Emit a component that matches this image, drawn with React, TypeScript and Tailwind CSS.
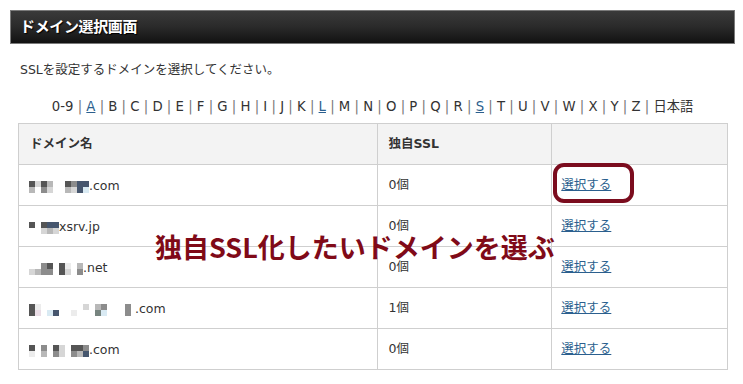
import React from 'react';

const FONT = { fontFamily: '"DejaVu Sans", "Noto Sans CJK JP", sans-serif' };

// ぼかし（モザイク）用の色
const PX: Record<string, string> = {
  a: 'bg-[#555555]',
  b: 'bg-[#8c8c8c]',
  c: 'bg-[#b8b8b8]',
  d: 'bg-[#d6d6d6]',
  e: 'bg-[#ececec]',
  n: 'bg-[#46566e]',
  p: 'bg-[#eadde6]',
  s: 'bg-[#d9eaf3]',
  g: 'bg-[#77847f]',
  '.': 'bg-transparent',
};

function Mosaic({ rows }: { rows: string[] }) {
  return (
    <span className="inline-flex flex-col align-middle">
      {rows.map((r, i) => (
        <span key={i} className="flex">
          {r.split('').map((ch, j) => (
            <span key={j} className={`block w-[6px] h-[6px] ${PX[ch]}`} />
          ))}
        </span>
      ))}
    </span>
  );
}

const letters = ['0-9', 'A', 'B', 'C', 'D', 'E', 'F', 'G', 'H', 'I', 'J', 'K', 'L', 'M', 'N', 'O', 'P', 'Q', 'R', 'S', 'T', 'U', 'V', 'W', 'X', 'Y', 'Z', '日本語'];
const linked = ['A', 'L', 'S'];

const rows = [
  { mosaic: ['adac..abnn', 'c.bd..cdns'], tld: '.com', ssl: '0個' },
  { mosaic: ['a.ann', '..dcd'], tld: 'xsrv.jp', ssl: '0個' },
  { mosaic: ['..ba.ae.c', 'dcbb.ad.b'], tld: '.net', ssl: '0個' },
  { mosaic: ['ae.......d.cb...b', 'ap.sn..e...gs...b'], tld: ' .com', ssl: '1個' },
  { mosaic: ['a.b.ad.aab', 'e.c.bd.bcn'], tld: '.com', ssl: '0個' },
];

export default function App() {
  return (
    <div className="relative w-[743px] h-[384px] bg-white overflow-hidden text-[#333]" style={FONT}>
      <div className="ml-[10px] mr-[8px] mt-[10px] h-[34px] flex items-center px-[9px] border border-[#7a7a7a] bg-gradient-to-b from-[#3a3a3a] via-[#2a2a2a] to-[#121212]">
        <span className="text-white font-bold text-[15px] tracking-tight [text-shadow:1px_1px_1px_#000]">ドメイン選択画面</span>
      </div>

      <p className="ml-[20px] mt-[17px] text-[12.5px] leading-[18px]">SSLを設定するドメインを選択してください。</p>

      <div className="mt-[19px] flex justify-center text-[13.25px] leading-[18px] pl-[2px]">
        {letters.map((l, i) => (
          <span key={l} className="whitespace-pre">
            {i > 0 && <span className="text-[#777]"> | </span>}
            {linked.includes(l) ? <a className="text-[#2b5f8e] underline">{l}</a> : l}
          </span>
        ))}
      </div>

      <table className="ml-[18px] mt-[7px] w-[710px] border-collapse text-[12.5px]">
        <colgroup>
          <col className="w-[359px]" />
          <col className="w-[175px]" />
          <col className="w-[176px]" />
        </colgroup>
        <thead>
          <tr className="h-[41px] bg-[#f3f3f3]">
            <th className="border border-[#cfcfcf] text-left font-semibold pl-[11px]">ドメイン名</th>
            <th className="border border-[#cfcfcf] text-left font-bold pl-[11px]">独自SSL</th>
            <th className="border border-[#cfcfcf]" />
          </tr>
        </thead>
        <tbody>
          {rows.map((r, i) => (
            <tr key={i} className="h-[41px]">
              <td className="border border-[#cfcfcf] pl-[10px]">
                <span className="inline-flex items-center">
                  <Mosaic rows={r.mosaic} />
                  <span className="whitespace-pre">{r.tld}</span>
                </span>
              </td>
              <td className="border border-[#cfcfcf] pl-[11px]">{r.ssl}</td>
              <td className="border border-[#cfcfcf] pl-[9px]">
                <a className="text-[#2b5f8e] underline">選択する</a>
              </td>
            </tr>
          ))}
        </tbody>
      </table>

      <div className="absolute left-[553px] top-[163px] w-[81px] h-[40px] border-[4px] border-[#7b0c1e] rounded-[11px]" />

      <div className="absolute left-[155px] top-[229px] text-[27px] leading-[36px] font-bold text-[#800a18] whitespace-nowrap" style={{ fontFamily: '"Noto Sans CJK JP", sans-serif' }}>
        独自SSL化したいドメインを選ぶ
      </div>
    </div>
  );
}
